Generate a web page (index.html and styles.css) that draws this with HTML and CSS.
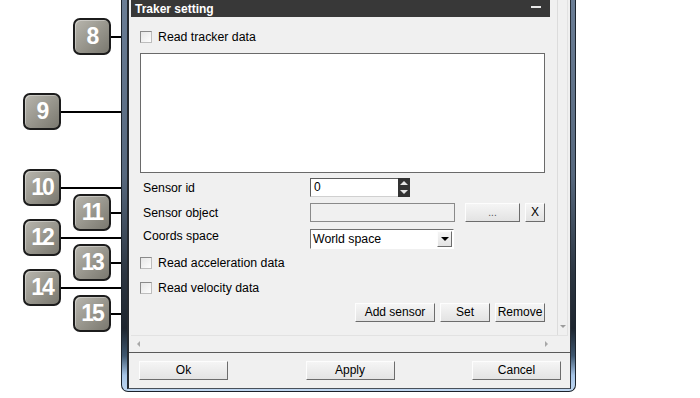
FILE: index.html
```html
<!DOCTYPE html>
<html lang="en">
<head>
    <meta charset="UTF-8">
    <meta name="viewport" content="width=device-width, initial-scale=1.0">
    <title>Traker setting</title>
    <link rel="stylesheet" href="styles.css">
</head>
<body>
    <div class="stage">
        <div class="callouts">
            <div class="callout near" style="top:18px"><span class="badge">8</span><span class="leader"></span></div>
            <div class="callout far" style="top:93px"><span class="badge">9</span><span class="leader"></span></div>
            <div class="callout far" style="top:169px"><span class="badge">10</span><span class="leader"></span></div>
            <div class="callout near" style="top:194px"><span class="badge">11</span><span class="leader"></span></div>
            <div class="callout far" style="top:219px"><span class="badge">12</span><span class="leader"></span></div>
            <div class="callout near" style="top:244px"><span class="badge">13</span><span class="leader"></span></div>
            <div class="callout far" style="top:269px"><span class="badge">14</span><span class="leader"></span></div>
            <div class="callout near" style="top:295px"><span class="badge">15</span><span class="leader"></span></div>
        </div>

        <div class="window">
            <div class="client">
                <div class="scroller">
                    <div class="scroll-content">
                        <div class="rollout">
                            <div class="rollout-title">
                                <span>Traker setting</span>
                                <span class="minimize"></span>
                            </div>
                            <div class="rollout-body">
                                <label class="check-row"><span class="checkbox"></span>Read tracker data</label>
                                <div class="data-box"></div>

                                <div class="field-row row-id">
                                    <span class="field-label">Sensor id</span>
                                    <div class="spin">
                                        <span class="spin-input">0</span>
                                        <span class="spin-buttons"><span class="up"></span><span class="down"></span></span>
                                    </div>
                                </div>

                                <div class="field-row row-object">
                                    <span class="field-label">Sensor object</span>
                                    <span class="disabled-input"></span>
                                    <button type="button" class="btn btn-browse">...</button>
                                    <button type="button" class="btn btn-clear">X</button>
                                </div>

                                <div class="field-row row-coords">
                                    <span class="field-label">Coords space</span>
                                    <div class="select">
                                        <span class="select-value">World space</span>
                                        <span class="select-arrow"></span>
                                    </div>
                                </div>

                                <label class="check-row row-accel"><span class="checkbox"></span>Read acceleration data</label>
                                <label class="check-row row-velocity"><span class="checkbox"></span>Read velocity data</label>

                                <div class="action-row">
                                    <button type="button" class="btn btn-add">Add sensor</button>
                                    <button type="button" class="btn btn-set">Set</button>
                                    <button type="button" class="btn btn-remove">Remove</button>
                                </div>
                            </div>
                        </div>
                    </div>
                    <div class="vscroll"><span class="arrow-down"></span></div>
                    <div class="hscroll"><span class="arrow-left"></span><span class="arrow-right"></span></div>
                    <div class="corner"></div>
                </div>
                <div class="footer">
                    <button type="button" class="btn btn-footer">Ok</button>
                    <button type="button" class="btn btn-footer">Apply</button>
                    <button type="button" class="btn btn-footer">Cancel</button>
                </div>
            </div>
        </div>
    </div>
</body>
</html>
```

FILE: styles.css
```css
body {
    margin: 0;
    background: #fff;
    font-family: "Liberation Sans", Arial, sans-serif;
    font-size: 12px;
    color: #000;
}
.stage {
    display: flex;
    height: 398px;
    overflow: hidden;
}

/* callouts on the left */
.callouts {
    position: relative;
    width: 121px;
    flex: none;
}
.callout {
    position: absolute;
    right: 0;
    display: flex;
    align-items: center;
}
.callout.near {
    left: 73px;
}
.callout.far {
    left: 23px;
}
.badge {
    width: 34px;
    height: 33px;
    border: 2px solid #1c1c1c;
    border-radius: 7px;
    background: linear-gradient(135deg, #b8b6ae 0%, #9c9a91 45%, #7a786f 100%);
    box-shadow: inset 1px 1px 0 rgba(255, 255, 255, 0.35);
    color: #fff;
    font-weight: bold;
    font-size: 23px;
    letter-spacing: -2px;
    display: flex;
    align-items: center;
    justify-content: center;
    flex: none;
}
.leader {
    flex: 1;
    height: 1px;
    background: #000;
    border-bottom: 1px solid rgba(0, 0, 0, 0.15);
}

/* window frame */
.window {
    width: 455px;
    height: 392px;
    border: 1px solid #1b232c;
    border-top: none;
    border-radius: 0 0 7px 7px;
    padding: 0 4px 3px 5px;
    box-sizing: border-box;
    background: linear-gradient(180deg, #6a7d95 0%, #56687e 45%, #2c3642 70%, #1d252f 84%, #3e5770 91%, #a6c4e6 96%, #bfd7f1 100%);
}
.client {
    height: 389px;
    box-sizing: border-box;
    background: #f0f0f0;
    border-left: 2px solid #252a30;
    border-right: 1px solid #2a3038;
    border-bottom: 1px solid #48505a;
    display: flex;
    flex-direction: column;
}
.scroller {
    display: grid;
    grid-template-columns: 426px 11px;
    grid-template-rows: 335px 17px;
    padding-left: 2px;
    border-bottom: 1px solid #5a5a5a;
}
.scroll-content {
    overflow: hidden;
}
.rollout {
    width: 419px;
}
.rollout-title {
    height: 17px;
    background: #383838;
    color: #fff;
    font-weight: bold;
    font-size: 12px;
    line-height: 16px;
    padding-left: 4px;
    display: flex;
    justify-content: space-between;
    align-items: center;
}
.minimize {
    width: 10px;
    height: 2px;
    background: #e8e8e8;
    margin: 0 9px 3px 0;
}
.rollout-body {
    padding: 14px 5px 0 9px;
}
.check-row {
    display: flex;
    align-items: center;
    height: 12px;
    line-height: 12px;
    font-size: 12.3px;
}
.checkbox {
    width: 10px;
    height: 10px;
    border: 1px solid #8a8a8a;
    border-right-color: #bdbdbd;
    border-bottom-color: #bdbdbd;
    background: linear-gradient(135deg, #e6e6e6, #fdfdfd);
    margin-right: 6px;
}
.data-box {
    margin-top: 10px;
    height: 118px;
    border: 1px solid #6a6a6a;
    background: #fff;
}
.field-row {
    display: flex;
    align-items: center;
    height: 19px;
}
.field-label {
    width: 167px;
    padding-left: 3px;
    flex: none;
    font-size: 12.3px;
}
.row-id {
    margin-top: 5px;
}
.row-object {
    margin-top: 6px;
}
.row-coords {
    margin-top: 7px;
    height: 20px;
    align-items: flex-start;
}
.row-coords .field-label {
    line-height: 15px;
}
.row-accel {
    margin-top: 8px;
}
.row-velocity {
    margin-top: 13px;
}
.spin {
    display: flex;
    height: 19px;
}
.spin-input {
    width: 84px;
    height: 17px;
    line-height: 17px;
    padding-left: 3px;
    background: #fff;
    border: 1px solid #5c5c5c;
    border-right: none;
    border-bottom-color: #d0d0d0;
}
.spin-buttons {
    width: 12px;
    background: #333;
    display: flex;
    flex-direction: column;
    align-items: center;
    justify-content: space-between;
    padding: 3px 0;
    box-sizing: border-box;
}
.spin-buttons .up {
    border-left: 4px solid transparent;
    border-right: 4px solid transparent;
    border-bottom: 4px solid #e6e6e6;
}
.spin-buttons .down {
    border-left: 4px solid transparent;
    border-right: 4px solid transparent;
    border-top: 4px solid #e6e6e6;
}
.disabled-input {
    width: 143px;
    height: 17px;
    border: 1px solid #8a8a8a;
    background: #f0f0f0;
}
.btn {
    font-family: "Liberation Sans", Arial, sans-serif;
    font-size: 12px;
    color: #000;
    height: 19px;
    padding: 0;
    border: 1px solid;
    border-color: #fdfdfd #6c6c6c #6c6c6c #fdfdfd;
    background: linear-gradient(180deg, #f5f5f5, #e3e3e3);
    line-height: 17px;
}
.btn-browse {
    width: 55px;
    margin-left: 10px;
    font-size: 10px;
    color: #555;
}
.btn-clear {
    width: 20px;
    margin-left: 5px;
}
.select {
    width: 144px;
    height: 20px;
    box-sizing: border-box;
    border: 1px solid;
    border-color: #707070 #fff #fff #707070;
    background: #fff;
    display: flex;
    align-items: center;
    justify-content: space-between;
}
.select-value {
    padding-left: 2px;
    font-size: 12.3px;
}
.select-arrow {
    width: 15px;
    height: 16px;
    box-sizing: border-box;
    margin-right: 1px;
    border: 1px solid;
    border-color: #fdfdfd #6c6c6c #6c6c6c #fdfdfd;
    background: linear-gradient(180deg, #f5f5f5, #e3e3e3);
    display: flex;
    align-items: center;
    justify-content: center;
}
.select-arrow::after {
    content: "";
    border-left: 4px solid transparent;
    border-right: 4px solid transparent;
    border-top: 4px solid #000;
}
.action-row {
    margin-top: 9px;
    display: flex;
    justify-content: flex-end;
    gap: 5px;
}
.btn-add {
    width: 80px;
}
.btn-set,
.btn-remove {
    width: 50px;
}

/* scroll bars */
.vscroll {
    border-left: 1px solid #dcdcdc;
    border-right: 1px solid #e2e2e2;
    display: flex;
    align-items: flex-end;
    justify-content: center;
    padding-bottom: 7px;
}
.arrow-down {
    border-left: 3px solid transparent;
    border-right: 3px solid transparent;
    border-top: 3px solid #9c9c9c;
}
.hscroll {
    border-top: 1px solid #e2e2e2;
    display: flex;
    align-items: center;
    justify-content: space-between;
    padding: 0 9px 0 6px;
}
.arrow-left {
    border-top: 3px solid transparent;
    border-bottom: 3px solid transparent;
    border-right: 3px solid #a8a8a8;
}
.arrow-right {
    border-top: 3px solid transparent;
    border-bottom: 3px solid transparent;
    border-left: 3px solid #a8a8a8;
}
.corner {
    border-top: 1px solid #e2e2e2;
}
.footer {
    flex: 1;
    display: flex;
    justify-content: space-between;
    align-items: flex-start;
    padding: 8px 9px 0 10px;
}
.btn-footer {
    width: 89px;
}
```
